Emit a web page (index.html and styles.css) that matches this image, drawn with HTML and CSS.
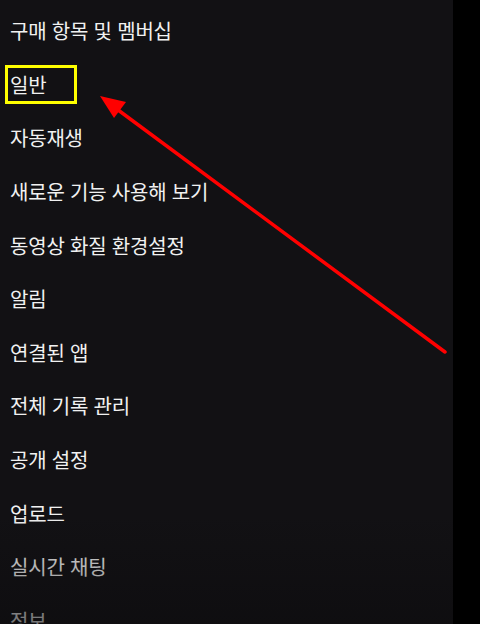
FILE: index.html
```html
<!DOCTYPE html>
<html lang="ko">
<head>
    <meta charset="UTF-8">
    <meta name="viewport" content="width=device-width, initial-scale=1.0">
    <title>설정</title>
    <link rel="stylesheet" href="styles.css">
</head>
<body>
    <div class="screen">
        <div class="settings">
            <ul class="menu">
                <li>구매 항목 및 멤버십</li>
                <li>일반</li>
                <li>자동재생</li>
                <li>새로운 기능 사용해 보기</li>
                <li>동영상 화질 환경설정</li>
                <li>알림</li>
                <li>연결된 앱</li>
                <li>전체 기록 관리</li>
                <li>공개 설정</li>
                <li>업로드</li>
                <li>실시간 채팅</li>
                <li>정보</li>
            </ul>
            <div class="fade"></div>
        </div>
        <div class="edge"></div>

        <!-- annotation overlay -->
        <div class="highlight"></div>
        <svg class="arrow" width="480" height="624" viewBox="0 0 480 624">
            <line x1="445" y1="352" x2="110" y2="104" stroke="#ff0000" stroke-width="3.5" stroke-linecap="round"/>
            <polygon points="100,96 126,102 114,118" fill="#ff0000"/>
        </svg>
    </div>
</body>
</html>
```

FILE: styles.css
```css
body {
    margin: 0;
    background-color: #000;
    font-family: "Noto Sans CJK KR", "Noto Sans", sans-serif;
}

.screen {
    position: relative;
    display: flex;
    width: 480px;
    height: 624px;
    overflow: hidden;
}

.settings {
    position: relative;
    flex: 1;
    background-color: #121114;
}

.edge {
    width: 27px;
    background-color: #000;
}

.menu {
    list-style: none;
    margin: 0;
    padding: 4px 0 0 0;
}

.menu li {
    height: 53.6px;
    display: flex;
    align-items: center;
    padding-left: 10px;
    font-size: 20px;
    letter-spacing: -0.2px;
    color: #f1f1f1;
}

.fade {
    position: absolute;
    left: 0;
    right: 0;
    bottom: 0;
    height: 110px;
    background: linear-gradient(to bottom, rgba(12, 11, 13, 0), rgba(12, 11, 13, 0.55));
}

.highlight {
    position: absolute;
    left: 5px;
    top: 65px;
    width: 66px;
    height: 33px;
    border: 3px solid #ffff00;
}

.arrow {
    position: absolute;
    left: 0;
    top: 0;
}
```
